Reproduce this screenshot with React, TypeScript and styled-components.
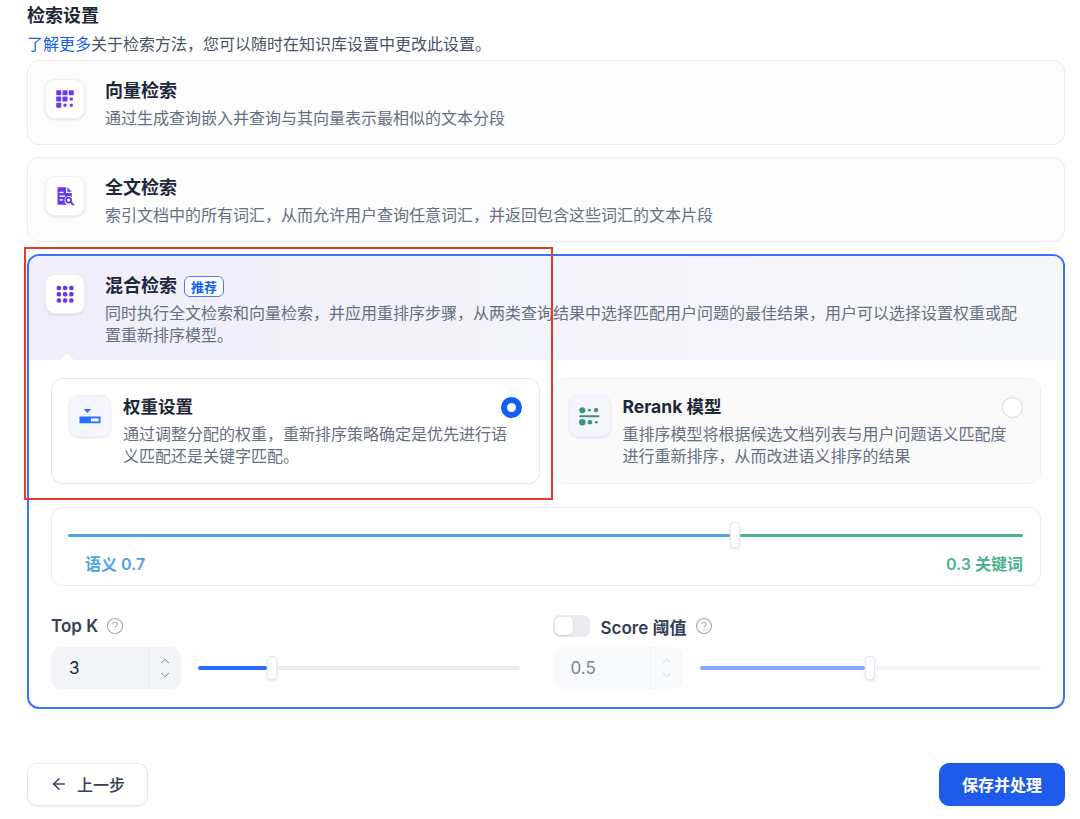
import styled, { createGlobalStyle } from "styled-components";
import { ArrowLeft, ChevronDown, ChevronUp, CircleHelp } from "lucide-react";

const GlobalStyle = createGlobalStyle`
    body {
        margin: 0;
        background: #ffffff;
        font-family: Inter, "Noto Sans CJK SC", sans-serif;
        color: #1d2939;
    }
`;

const Page = styled.div`
    position: relative;
    width: 1080px;
    height: 819px;
    box-sizing: border-box;
    padding: 4px 15px 0 27px;
    display: flex;
    flex-direction: column;
`;

const Heading = styled.h1`
    margin: 0;
    font-size: 18px;
    line-height: 24px;
    font-weight: 700;
    color: #1d2939;
`;

const Intro = styled.p`
    margin: 5px 0 0;
    font-size: 16px;
    line-height: 22px;
    color: #475467;
`;

const Link = styled.a`
    color: #155eef;
    text-decoration: none;
`;

const Methods = styled.div`
    margin-top: 5px;
    display: flex;
    flex-direction: column;
    gap: 12px;
`;

const MethodCard = styled.div`
    display: flex;
    align-items: flex-start;
    padding: 18px 17px 15px;
    border: 1px solid #eaecf0;
    border-radius: 12px;
    background: #fcfcfd;
`;

const IconBox = styled.div<{ $tint?: boolean; $size?: number }>`
    flex: none;
    box-sizing: border-box;
    width: ${({ $size }) => $size ?? 40}px;
    height: ${({ $size }) => $size ?? 40}px;
    display: flex;
    align-items: center;
    justify-content: center;
    border-radius: 10px;
    background: ${({ $tint }) => ($tint ? "#f4f5fd" : "#ffffff")};
    border: 0.5px solid ${({ $tint }) => ($tint ? "#eff0f8" : "#eef0f4")};
    box-shadow: 0 1px 3px rgba(16, 24, 40, 0.08), 0 1px 2px rgba(16, 24, 40, 0.04);
`;

const MethodText = styled.div`
    margin-left: 20px;
    flex: 1;
    min-width: 0;
`;

const TitleLine = styled.div`
    display: flex;
    align-items: center;
    gap: 7px;
`;

const Title = styled.div<{ $small?: boolean }>`
    font-size: ${({ $small }) => ($small ? "17.5px" : "18px")};
    line-height: 24px;
    font-weight: 700;
    color: #1d2939;
`;

const Desc = styled.div`
    margin-top: 4px;
    font-size: 16px;
    line-height: 22px;
    color: #676f83;
`;

const Badge = styled.span`
    display: inline-flex;
    align-items: center;
    height: 19px;
    padding: 0 6px;
    border: 1px solid #4b7bf5;
    border-radius: 6px;
    font-size: 13px;
    font-weight: 600;
    color: #155eef;
    background: #ffffff;
`;

const HybridCard = styled.div`
    border: 2px solid #3a74f7;
    border-radius: 12px;
    overflow: hidden;
    background: #ffffff;
`;

const HybridHeader = styled.div`
    position: relative;
    display: flex;
    align-items: flex-start;
    padding: 18px 38px 14px 16px;
    background: linear-gradient(90deg, #efeefa 0%, #f4f4fa 60%, #f6f7fb 100%);
`;

const Pointer = styled.div`
    position: absolute;
    left: 31px;
    bottom: 0;
    width: 0;
    height: 0;
    border-left: 7px solid transparent;
    border-right: 7px solid transparent;
    border-bottom: 7px solid #ffffff;
`;

const HybridBody = styled.div`
    padding: 18px 22px 18px;
`;

const OptionGrid = styled.div`
    display: grid;
    grid-template-columns: 1fr 1fr;
    gap: 13px;
`;

const OptionCard = styled.div<{ $active?: boolean }>`
    display: flex;
    align-items: flex-start;
    padding: 16px 20px 16px ${({ $active }) => ($active ? 17 : 15)}px;
    border: 1px solid ${({ $active }) => ($active ? "#e4e7ec" : "#f0f1f4")};
    border-radius: 12px;
    background: ${({ $active }) => ($active ? "#ffffff" : "#fafafb")};
    box-shadow: ${({ $active }) => ($active ? "0 1px 2px rgba(16, 24, 40, 0.05)" : "none")};
`;

const OptionText = styled.div`
    margin-left: 12px;
    flex: 1;
    min-width: 0;
`;

const TitleRow = styled.div`
    display: flex;
    align-items: center;
    justify-content: space-between;
`;

const Radio = styled.span<{ $checked?: boolean }>`
    flex: none;
    box-sizing: border-box;
    width: 21px;
    height: 21px;
    margin-right: -3px;
    border-radius: 50%;
    background: #ffffff;
    border: ${({ $checked }) => ($checked ? "6px solid #155eef" : "1px solid #d0d5dd")};
`;

const WeightPanel = styled.div`
    margin-top: 23px;
    padding: 14px 17px 10px 16px;
    border: 1px solid #eaecf0;
    border-radius: 12px;
    background: #ffffff;
`;

const SliderTrack = styled.div`
    display: flex;
    align-items: center;
    height: 26px;
`;

const Segment = styled.div<{ $color: string; $ratio?: number; $thick?: number }>`
    height: ${({ $thick }) => $thick ?? 3}px;
    border-radius: 2px;
    background: ${({ $color }) => $color};
    flex: ${({ $ratio }) => ($ratio === undefined ? "1 1 0" : `0 0 calc((100% - 10px) * ${$ratio})`)};
`;

const Thumb = styled.div<{ $tall?: number }>`
    flex: none;
    box-sizing: border-box;
    width: 10px;
    height: ${({ $tall }) => $tall ?? 26}px;
    border-radius: 4px;
    background: #ffffff;
    border: 1px solid #e4e7ec;
    box-shadow: 0 1px 3px rgba(16, 24, 40, 0.12);
`;

const WeightLabels = styled.div`
    margin-top: 5px;
    display: flex;
    justify-content: space-between;
    font-size: 16px;
    line-height: 22px;
    font-weight: 600;
`;

const WeightLabel = styled.span<{ $color: string; $indent?: number }>`
    color: ${({ $color }) => $color};
    padding-left: ${({ $indent }) => $indent ?? 0}px;
`;

const ParamGrid = styled.div`
    margin-top: 28px;
    display: grid;
    grid-template-columns: 1fr 1fr;
    gap: 13px;
`;

const ParamGroup = styled.div`
    display: flex;
    flex-direction: column;
`;

const ParamHead = styled.div`
    display: flex;
    align-items: center;
    height: 24px;
    gap: 8px;
`;

const ParamLabel = styled.span`
    font-size: 17px;
    font-weight: 600;
    color: #344054;
`;

const Help = styled(CircleHelp)`
    color: #a2a9b6;
`;

const Toggle = styled.span`
    box-sizing: border-box;
    width: 37px;
    height: 22px;
    margin-right: 3px;
    padding: 2px;
    border-radius: 7px;
    background: #e9ebf0;
    display: flex;
    align-items: center;
`;

const Knob = styled.span`
    width: 18px;
    height: 18px;
    border-radius: 5px;
    background: #ffffff;
    box-shadow: 0 1px 2px rgba(16, 24, 40, 0.15);
`;

const ParamControls = styled.div<{ $end: number }>`
    margin-top: 9px;
    display: flex;
    align-items: center;
    gap: 17px;
    padding-right: ${({ $end }) => $end}px;
`;

const NumberBox = styled.div<{ $disabled?: boolean }>`
    flex: none;
    width: 130px;
    height: 42px;
    display: flex;
    border-radius: 10px;
    background: ${({ $disabled }) => ($disabled ? "#f9fafb" : "#f2f4f7")};
    color: ${({ $disabled }) => ($disabled ? "#7d8594" : "#1d2939")};
`;

const NumberValue = styled.span`
    flex: 1;
    display: flex;
    align-items: center;
    padding-left: 18px;
    font-size: 17px;
`;

const Stepper = styled.span<{ $disabled?: boolean }>`
    width: 32px;
    display: flex;
    flex-direction: column;
    align-items: center;
    justify-content: center;
    border-left: 1px solid ${({ $disabled }) => ($disabled ? "#f2f4f7" : "#e8eaee")};
    color: ${({ $disabled }) => ($disabled ? "#c6cbd3" : "#667085")};
`;

const Slider = styled.div`
    flex: 1;
    display: flex;
    align-items: center;
    height: 26px;
`;

const Footer = styled.div`
    margin-top: 53.5px;
    display: flex;
    justify-content: space-between;
`;

const Button = styled.button<{ $primary?: boolean }>`
    height: 43px;
    display: inline-flex;
    align-items: center;
    gap: 9px;
    padding: 0 ${({ $primary }) => ($primary ? "22px" : "22px")};
    border-radius: 10px;
    font-family: inherit;
    font-size: 16px;
    font-weight: ${({ $primary }) => ($primary ? 600 : 500)};
    border: 1px solid ${({ $primary }) => ($primary ? "#1f5bea" : "#e4e7ec")};
    background: ${({ $primary }) => ($primary ? "#1f5bea" : "#ffffff")};
    color: ${({ $primary }) => ($primary ? "#ffffff" : "#344054")};
    box-shadow: 0 1px 2px rgba(16, 24, 40, 0.05);
`;

const Annotation = styled.div`
    position: absolute;
    left: 24px;
    top: 247px;
    width: 529px;
    height: 253px;
    box-sizing: border-box;
    border: 2px solid #e5392b;
    pointer-events: none;
`;

const PURPLE = "#6938ef";

const VectorIcon = () => (
    <svg width="20" height="20" viewBox="0 0 16 16" fill={PURPLE}>
        <rect x="1" y="1" width="4" height="4" rx="0.6" />
        <rect x="6" y="1" width="4" height="4" rx="0.6" />
        <rect x="11" y="1" width="4" height="4" rx="0.6" />
        <rect x="1" y="6" width="4" height="4" rx="0.6" />
        <rect x="6" y="6" width="4" height="4" rx="0.6" />
        <rect x="11.8" y="6.8" width="2.4" height="2.4" rx="0.5" />
        <rect x="1" y="11" width="4" height="4" rx="0.6" />
        <rect x="6.8" y="11.8" width="2.4" height="2.4" rx="0.5" />
        <rect x="11.8" y="11.8" width="2.4" height="2.4" rx="0.5" />
    </svg>
);

const FullTextIcon = () => (
    <svg width="20" height="20" viewBox="0 0 16 16">
        <path d="M2 1h6.8v4.6h4.6V15H2z" fill={PURPLE} />
        <path d="M9.8 1l3.6 3.6H9.8z" fill={PURPLE} />
        <rect x="3.6" y="4.6" width="3.2" height="1.1" fill="#fff" />
        <rect x="3.6" y="7.6" width="4.4" height="1.1" fill="#fff" />
        <rect x="3.6" y="10.6" width="2.6" height="1.1" fill="#fff" />
        <circle cx="11.2" cy="11.6" r="3.6" fill="#fff" />
        <circle cx="10.9" cy="11.2" r="2" fill="none" stroke={PURPLE} strokeWidth="1.4" />
        <path d="M12.4 12.7l2.2 2.2" stroke={PURPLE} strokeWidth="1.5" strokeLinecap="round" />
    </svg>
);

const HybridIcon = () => (
    <svg width="20" height="20" viewBox="0 0 16 16" fill={PURPLE}>
        {[1.3, 6.3, 11.3].map((y) =>
            [1.3, 6.3, 11.3].map((x) => (
                <rect key={`${x}-${y}`} x={x} y={y} width="3.6" height="3.6" rx="1.4" />
            ))
        )}
    </svg>
);

const WeightIcon = () => (
    <svg width="24" height="24" viewBox="0 0 16 16">
        <path d="M3.8 3.4h5L6.3 6z" fill="#296dff" />
        <rect x="1" y="8.4" width="14" height="4.4" rx="0.4" fill="#296dff" />
        <rect x="8.6" y="9.6" width="5.2" height="2" fill="#ffffff" />
    </svg>
);

const RerankIcon = () => (
    <svg width="23" height="23" viewBox="0 0 16 16" fill="#3a9478">
        <circle cx="3" cy="3.6" r="2.1" />
        <circle cx="8" cy="3.6" r="1" />
        <circle cx="12.6" cy="3.6" r="1.5" />
        <rect x="0.8" y="7.2" width="14.2" height="1.4" rx="0.7" />
        <circle cx="3" cy="12" r="2.3" />
        <circle cx="8.3" cy="12" r="1.6" />
        <circle cx="12.8" cy="12" r="0.9" />
    </svg>
);

const NumberInput = ({ value, disabled }: { value: string; disabled?: boolean }) => (
    <NumberBox $disabled={disabled}>
        <NumberValue>{value}</NumberValue>
        <Stepper $disabled={disabled}>
            <ChevronUp size={14} strokeWidth={1.6} />
            <ChevronDown size={14} strokeWidth={1.6} />
        </Stepper>
    </NumberBox>
);

const methods = [
    { title: "向量检索", desc: "通过生成查询嵌入并查询与其向量表示最相似的文本分段", icon: <VectorIcon /> },
    {
        title: "全文检索",
        desc: "索引文档中的所有词汇，从而允许用户查询任意词汇，并返回包含这些词汇的文本片段",
        icon: <FullTextIcon />,
    },
];

export default function App() {
    const semantic = 0.7;
    const topK = 3;
    const score = 0.5;

    return (
        <>
            <GlobalStyle />
            <Page>
                <Heading>检索设置</Heading>
                <Intro>
                    <Link href="#">了解更多</Link>关于检索方法，您可以随时在知识库设置中更改此设置。
                </Intro>

                <Methods>
                    {methods.map((m) => (
                        <MethodCard key={m.title}>
                            <IconBox>{m.icon}</IconBox>
                            <MethodText>
                                <Title>{m.title}</Title>
                                <Desc>{m.desc}</Desc>
                            </MethodText>
                        </MethodCard>
                    ))}

                    <HybridCard>
                        <HybridHeader>
                            <IconBox>
                                <HybridIcon />
                            </IconBox>
                            <MethodText>
                                <TitleLine>
                                    <Title>混合检索</Title>
                                    <Badge>推荐</Badge>
                                </TitleLine>
                                <Desc>
                                    同时执行全文检索和向量检索，并应用重排序步骤，从两类查询结果中选择匹配用户问题的最佳结果，用户可以选择设置权重或配置重新排序模型。
                                </Desc>
                            </MethodText>
                            <Pointer />
                        </HybridHeader>

                        <HybridBody>
                            <OptionGrid>
                                <OptionCard $active>
                                    <IconBox $tint $size={42}>
                                        <WeightIcon />
                                    </IconBox>
                                    <OptionText>
                                        <TitleRow>
                                            <Title $small>权重设置</Title>
                                            <Radio $checked />
                                        </TitleRow>
                                        <Desc>通过调整分配的权重，重新排序策略确定是优先进行语义匹配还是关键字匹配。</Desc>
                                    </OptionText>
                                </OptionCard>
                                <OptionCard>
                                    <IconBox $tint $size={42}>
                                        <RerankIcon />
                                    </IconBox>
                                    <OptionText>
                                        <TitleRow>
                                            <Title $small>Rerank 模型</Title>
                                            <Radio />
                                        </TitleRow>
                                        <Desc>重排序模型将根据候选文档列表与用户问题语义匹配度进行重新排序，从而改进语义排序的结果</Desc>
                                    </OptionText>
                                </OptionCard>
                            </OptionGrid>

                            <WeightPanel>
                                <SliderTrack>
                                    <Segment $color="#4fa3e6" $ratio={semantic} />
                                    <Thumb />
                                    <Segment $color="#4cb38f" />
                                </SliderTrack>
                                <WeightLabels>
                                    <WeightLabel $color="#4fa3e6" $indent={17}>
                                        语义 {semantic}
                                    </WeightLabel>
                                    <WeightLabel $color="#4cb38f">
                                        {(1 - semantic).toFixed(1)} 关键词
                                    </WeightLabel>
                                </WeightLabels>
                            </WeightPanel>

                            <ParamGrid>
                                <ParamGroup>
                                    <ParamHead>
                                        <ParamLabel>Top K</ParamLabel>
                                        <Help size={18} strokeWidth={1.5} />
                                    </ParamHead>
                                    <ParamControls $end={20}>
                                        <NumberInput value={String(topK)} />
                                        <Slider>
                                            <Segment $color="#296dff" $ratio={(topK - 1) / 9} $thick={4} />
                                            <Thumb $tall={24} />
                                            <Segment $color="#eaecf0" $thick={4} />
                                        </Slider>
                                    </ParamControls>
                                </ParamGroup>
                                <ParamGroup>
                                    <ParamHead>
                                        <Toggle>
                                            <Knob />
                                        </Toggle>
                                        <ParamLabel>Score 阈值</ParamLabel>
                                        <Help size={18} strokeWidth={1.5} />
                                    </ParamHead>
                                    <ParamControls $end={0}>
                                        <NumberInput value={String(score)} disabled />
                                        <Slider>
                                            <Segment $color="#84abff" $ratio={score} $thick={4} />
                                            <Thumb $tall={24} />
                                            <Segment $color="#f2f4f7" $thick={4} />
                                        </Slider>
                                    </ParamControls>
                                </ParamGroup>
                            </ParamGrid>
                        </HybridBody>
                    </HybridCard>
                </Methods>

                <Footer>
                    <Button>
                        <ArrowLeft size={18} strokeWidth={2} />
                        上一步
                    </Button>
                    <Button $primary>保存并处理</Button>
                </Footer>

                <Annotation />
            </Page>
        </>
    );
}
